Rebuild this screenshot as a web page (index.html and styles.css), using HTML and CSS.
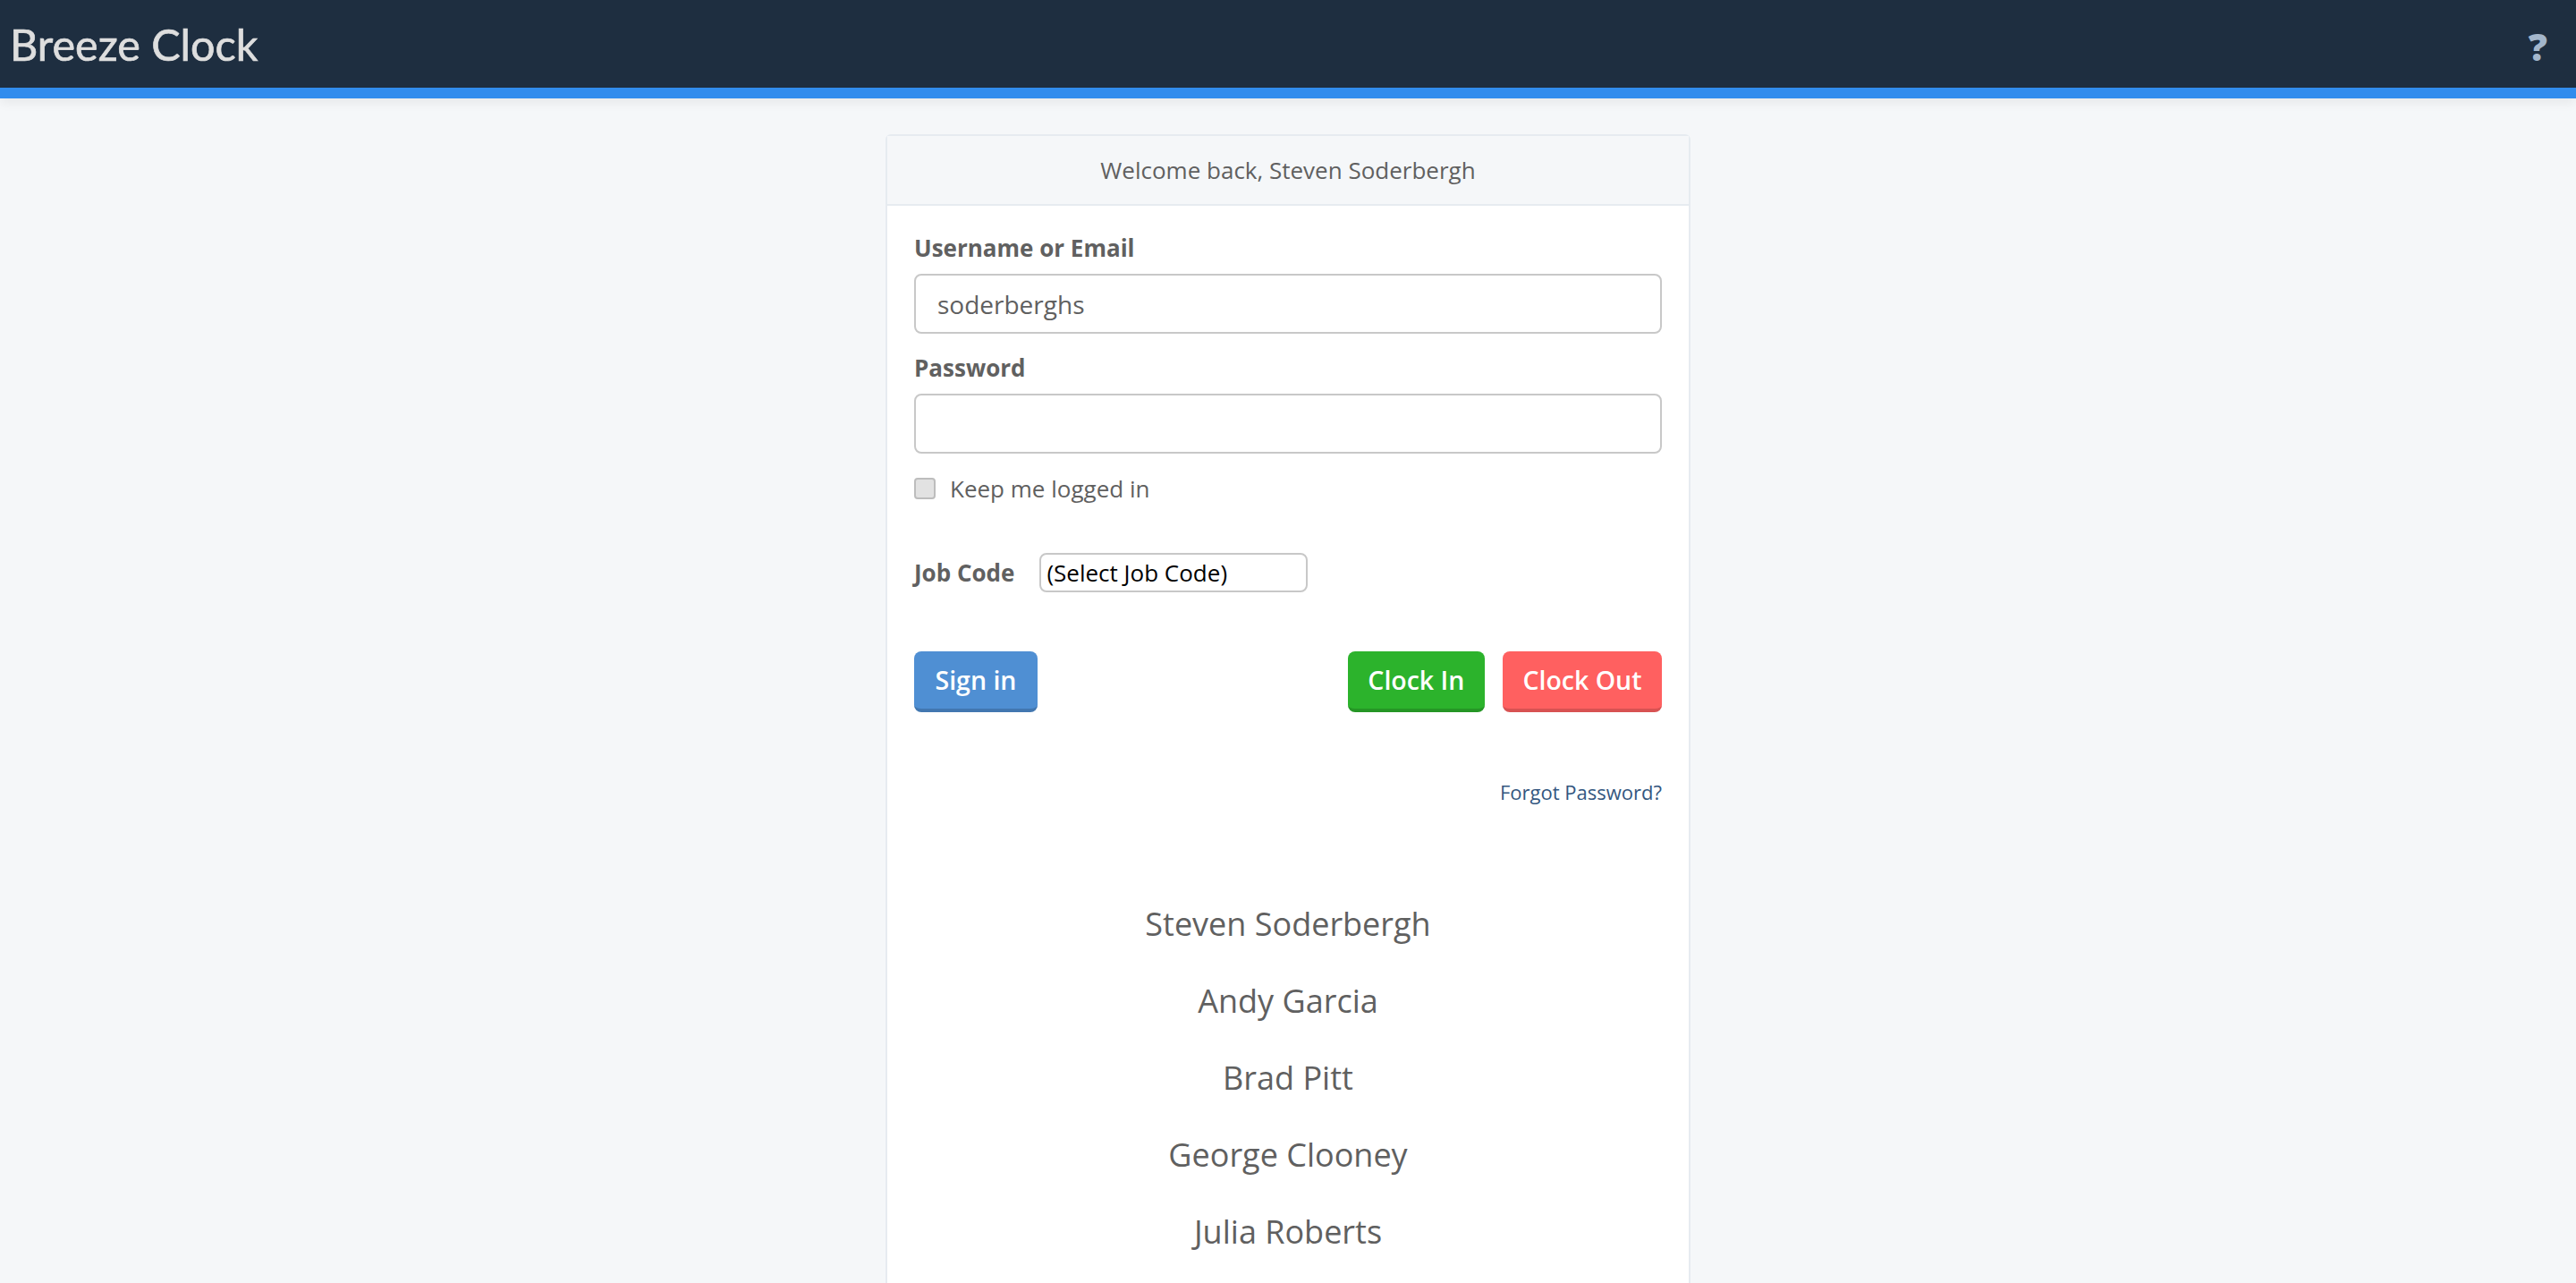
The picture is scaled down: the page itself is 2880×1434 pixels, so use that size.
FILE: index.html
```html
<!DOCTYPE html>
<html>
<head>
<meta name="viewport" content="width=device-width, initial-scale=1">
<title>Breeze Clock</title>
<link rel="stylesheet" href="styles.css">
</head>
<body>

<header class="topbar">
  <a class="brand" href="#">Breeze Clock</a>
  <a class="help" href="#">?</a>
</header>

<main class="page">
  <section class="card">
    <div class="card-head">Welcome back, Steven Soderbergh</div>
    <form class="card-body">
      <label class="field-label" for="username">Username or Email</label>
      <input class="text-input" type="text" id="username" value="soderberghs">

      <label class="field-label field-label-next" for="password">Password</label>
      <input class="text-input" type="password" id="password">

      <label class="keep">
        <input class="keep-box" type="checkbox">
        <span>Keep me logged in</span>
      </label>

      <div class="job-row">
        <label class="job-label" for="jobcode">Job Code</label>
        <select class="job-select" id="jobcode">
          <option>(Select Job Code)</option>
        </select>
      </div>

      <div class="actions">
        <button class="btn btn-blue" type="submit">Sign in</button>
        <div class="clock-btns">
          <button class="btn btn-green" type="button">Clock In</button>
          <button class="btn btn-red" type="button">Clock Out</button>
        </div>
      </div>

      <div class="forgot"><a href="#">Forgot Password?</a></div>
    </form>

    <ul class="names">
      <li>Steven Soderbergh</li>
      <li>Andy Garcia</li>
      <li>Brad Pitt</li>
      <li>George Clooney</li>
      <li>Julia Roberts</li>
    </ul>
  </section>
</main>

</body>
</html>
```

FILE: styles.css
```css
html, body {
  margin: 0;
  height: 1434px;
  overflow: hidden;
}

body {
  background-color: #f5f7f9;
  color: #606060;
  font-family: "Open Sans", sans-serif;
  font-size: 26px;
}

.topbar {
  display: flex;
  align-items: center;
  justify-content: space-between;
  height: 98px;
  padding: 0 32px 0 11px;
  background-color: #1e2e40;
  border-bottom: 12px solid #318ced;
  box-shadow: 0 4px 12px rgba(0, 0, 0, 0.07);
}

.brand {
  color: #dedede;
  font-family: Lato, sans-serif;
  font-size: 48.5px;
  -webkit-text-stroke: 0.7px #dedede;
  text-decoration: none;
}

.help {
  padding-top: 4px;
  color: #a3b6cb;
  font-family: "Open Sans", sans-serif;
  font-size: 42px;
  font-weight: 800;
  text-decoration: none;
}

.page {
  display: flex;
  justify-content: center;
  padding-top: 40px;
}

.card {
  box-sizing: border-box;
  width: 900px;
  height: 1400px;
  background-color: #fff;
  border: 2px solid #e6ebf0;
  border-radius: 6px;
}

.card-head {
  height: 76px;
  line-height: 76px;
  text-align: center;
  background-color: #f5f7f9;
  border-bottom: 2px solid #e6ebf0;
}

.card-body {
  display: flex;
  flex-direction: column;
  padding: 29px 30px 0;
}

.field-label {
  font-weight: 700;
  line-height: 36px;
  margin-bottom: 11px;
}

.field-label-next {
  margin-top: 20px;
}

.text-input {
  box-sizing: border-box;
  width: 100%;
  height: 67px;
  padding: 0 24px;
  background-color: #fff;
  border: 2px solid #c8c8c8;
  border-radius: 8px;
  color: #606060;
  font-family: "Open Sans", sans-serif;
  font-size: 28px;
}

.keep {
  display: flex;
  align-items: center;
  gap: 16px;
  margin-top: 21px;
  line-height: 36px;
}

.keep-box {
  appearance: none;
  box-sizing: border-box;
  width: 24px;
  height: 24px;
  margin: 0;
  background-color: #e2e2e2;
  border: 2px solid #bdbdbd;
  border-radius: 4px;
}

.job-row {
  display: flex;
  align-items: center;
  gap: 28px;
  margin-top: 54px;
}

.job-label {
  font-weight: 700;
}

.job-select {
  appearance: none;
  box-sizing: border-box;
  width: 300px;
  height: 44px;
  padding: 0 6px;
  background-color: #fff;
  border: 2px solid #c8c8c8;
  border-radius: 8px;
  color: #000;
  font-family: "Open Sans", sans-serif;
  font-size: 26px;
}

.actions {
  display: flex;
  justify-content: space-between;
  margin-top: 66px;
}

.clock-btns {
  display: flex;
  gap: 20px;
}

.btn {
  box-sizing: border-box;
  height: 68px;
  padding: 0 22.5px;
  border: none;
  border-radius: 8px;
  color: #fff;
  font-family: "Open Sans", sans-serif;
  font-size: 28.5px;
  font-weight: 600;
  cursor: pointer;
}

.btn-blue {
  padding: 0 23.5px;
  background-color: #4f8fd3;
  border-bottom: 4px solid #4277b0;
}

.btn-green {
  background-color: #2cb32c;
  border-bottom: 4px solid #259625;
}

.btn-red {
  background-color: #ff6060;
  border-bottom: 4px solid #d85252;
}

.forgot {
  margin-top: 73px;
  text-align: right;
  font-size: 22px;
  line-height: 32px;
}

.forgot a {
  color: #34577f;
  text-decoration: none;
}

.names {
  list-style: none;
  margin: 107px 0 0;
  padding: 0;
  text-align: center;
  font-size: 36px;
}

.names li {
  height: 86px;
  line-height: 50px;
}
```
